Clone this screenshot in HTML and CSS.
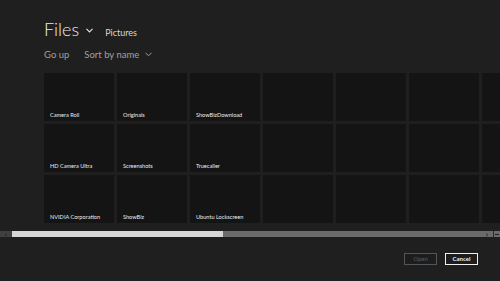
FILE: index.html
```html
<!DOCTYPE html>
<html lang="en">
<head>
  <meta charset="UTF-8" />
  <title>Files</title>
  <link rel="stylesheet" href="styles.css">
</head>
<body>

<header class="top">
  <div class="title-row">
    <h1>Files</h1>
    <svg class="chev big" width="7" height="5" viewBox="0 0 7 5"><polyline points="0.5,0.8 3.5,3.8 6.5,0.8" fill="none" stroke="#e0e0e0" stroke-width="1.2"/></svg>
    <span class="folder">Pictures</span>
  </div>
  <div class="commands">
    <span>Go up</span>
    <span>Sort by name
      <svg class="chev" width="7" height="5" viewBox="0 0 7 5"><polyline points="0.5,0.8 3.5,3.8 6.5,0.8" fill="none" stroke="#a0a0a0" stroke-width="1"/></svg>
    </span>
  </div>
</header>

<main class="viewport">
  <div class="grid" id="grid"></div>
</main>

<div class="scrollbar">
  <div class="sb-btn left">&#8249;</div>
  <div class="sb-thumb"></div>
  <div class="sb-track"></div>
  <div class="sb-btn right">&#8250;</div>
  <div class="sb-zoom"><span></span></div>
</div>

<footer class="actions">
  <button class="btn disabled">Open</button>
  <button class="btn">Cancel</button>
</footer>

<script>
  const folders = [
    'Camera Roll', 'HD Camera Ultra', 'NVIDIA Corporation',
    'Originals', 'Screenshots', 'ShowBiz',
    'ShowBizDownload', 'Truecaller', 'Ubuntu Lockscreen'
  ];
  const grid = document.getElementById('grid');
  for (let i = 0; i < 27; i++) {
    const tile = document.createElement('div');
    tile.className = 'tile';
    if (folders[i]) tile.innerHTML = `<span>${folders[i]}</span>`;
    grid.appendChild(tile);
  }
</script>

</body>
</html>
```

FILE: styles.css
```css
body {
  margin: 0;
  width: 500px;
  height: 281px;
  overflow: hidden;
  background: #1f1f1f;
  color: #e6e6e6;
  font-family: Lato, "Open Sans", sans-serif;
}
.top {
  padding: 17px 0 0 44px;
}
.title-row {
  display: flex;
  align-items: baseline;
  height: 24px;
}
h1 {
  margin: 0;
  font-size: 18px;
  line-height: 25px;
  font-weight: 300;
  color: #ececec;
}
.chev.big {
  margin: 0 12px 0 7px;
  position: relative;
  top: -3px;
}
.folder {
  font-size: 9px;
  color: #d8d8d8;
}
.commands {
  display: flex;
  gap: 15px;
  margin-top: 7px;
  height: 14px;
  font-size: 9.5px;
  line-height: 14px;
  color: #a0a0a0;
}
.commands .chev {
  margin-left: 3px;
  vertical-align: 1px;
}
.viewport {
  margin-top: 11px;
  padding-left: 44px;
  height: 150px;
  overflow: hidden;
}
.grid {
  display: grid;
  grid-auto-flow: column;
  grid-template-rows: repeat(3, 48px);
  grid-auto-columns: 70px;
  gap: 3px;
}
.tile {
  background: #141414;
  display: flex;
  align-items: flex-end;
  padding: 0 6px 2px;
  font-size: 5.6px;
  line-height: 9px;
  color: #ececec;
  white-space: nowrap;
}
.scrollbar {
  margin-top: 8px;
  height: 6px;
  display: flex;
  background: #6b6b6b;
}
.sb-btn {
  width: 12px;
  font-size: 8px;
  line-height: 6px;
  text-align: center;
  color: #1e1e1e;
  font-weight: bold;
}
.sb-btn.left {
  background: #404040;
}
.sb-thumb {
  width: 211px;
  background: #d6d6d6;
}
.sb-track {
  flex: 1;
}
.sb-zoom {
  width: 6px;
  border-left: 1px solid #2a2a2a;
  display: flex;
  align-items: center;
  justify-content: center;
}
.sb-zoom span {
  width: 4px;
  height: 1px;
  background: #1e1e1e;
}
.actions {
  display: flex;
  justify-content: flex-end;
  gap: 8px;
  margin-top: 16px;
  padding-right: 22px;
}
.btn {
  width: 33px;
  height: 12px;
  padding: 0;
  background: #1d1d1d;
  border: 1px solid #f0f0f0;
  color: #f0f0f0;
  font-family: Lato, sans-serif;
  font-size: 6px;
  font-weight: 700;
  line-height: 10px;
}
.btn.disabled {
  border-color: #555;
  color: #5c5c5c;
  font-weight: 400;
}
```
